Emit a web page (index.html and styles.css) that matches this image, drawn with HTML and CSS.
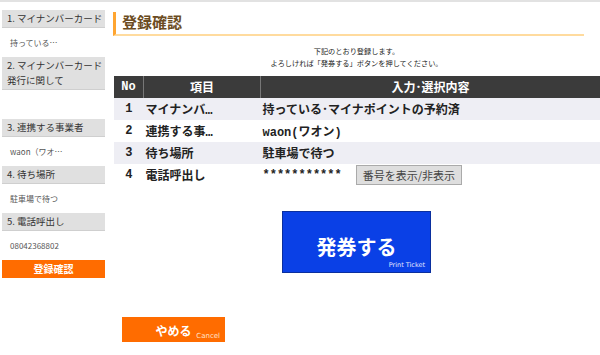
FILE: index.html
```html
<!DOCTYPE html>
<html>
<head>
    <title>登録確認</title>
    <link rel="stylesheet" href="styles.css">
</head>
<body>

<div id="page">
    <div id="sidebar">
        <div class="step-title">1. マイナンバーカード</div>
        <div class="step-value">持っている…</div>
        <div class="step-title">2. マイナンバーカード<br>発行に関して</div>
        <div class="step-value"></div>
        <div class="step-title">3. 連携する事業者</div>
        <div class="step-value">waon（ワオ…</div>
        <div class="step-title">4. 待ち場所</div>
        <div class="step-value">駐車場で待つ</div>
        <div class="step-title">5. 電話呼出し</div>
        <div class="step-value">08042368802</div>
        <div class="step-current">登録確認</div>
    </div>

    <div id="main">
        <h1 class="page-title">登録確認</h1>
        <p class="guide">下記のとおり登録します。<br>よろしければ「発券する」ボタンを押してください。</p>

        <table class="confirm">
            <tr>
                <th class="col-no">No</th>
                <th class="col-item">項目</th>
                <th>入力･選択内容</th>
            </tr>
            <tr>
                <td class="col-no">1</td>
                <td>マイナンバ…</td>
                <td>持っている･マイナポイントの予約済</td>
            </tr>
            <tr>
                <td class="col-no">2</td>
                <td>連携する事…</td>
                <td>waon(ワオン)</td>
            </tr>
            <tr>
                <td class="col-no">3</td>
                <td>待ち場所</td>
                <td>駐車場で待つ</td>
            </tr>
            <tr>
                <td class="col-no">4</td>
                <td>電話呼出し</td>
                <td><span id="tel">***********</span><button type="button" class="toggle" onclick="toggleTel()">番号を表示/非表示</button></td>
            </tr>
        </table>

        <div class="print-wrap">
            <button type="button" class="btn-print">
                <span class="btn-main">発券する</span>
                <span class="btn-sub">Print Ticket</span>
            </button>
        </div>

        <button type="button" class="btn-cancel">
            <span class="btn-main">やめる</span>
            <span class="btn-sub">Cancel</span>
        </button>
    </div>
</div>

<script>
    let shown = false;
    function toggleTel() {
        shown = !shown;
        document.getElementById('tel').innerText = shown ? '08042368802' : '***********';
    }
</script>

</body>
</html>
```

FILE: styles.css
```css
body {
    margin: 0;
    border-top: 2px solid #e2e2e2;
    font-family: "Noto Sans CJK JP", sans-serif;
    color: #333;
    background-color: #fff;
}
#page {
    display: flex;
    padding-top: 8px;
}
#sidebar {
    width: 103px;
    margin-left: 2px;
    flex-shrink: 0;
}
.step-title {
    background-color: #e0e0e0;
    border-bottom: 1px solid #cfcfcf;
    padding: 1px 0 1px 5px;
    font-size: 9.5px;
    line-height: 15px;
    color: #333;
    white-space: nowrap;
}
.step-value {
    height: 29px;
    line-height: 29px;
    padding-left: 8px;
    font-size: 8px;
    color: #555;
}
.step-current {
    background-color: #ff6c00;
    color: #fff;
    font-size: 10px;
    font-weight: bold;
    line-height: 18px;
    text-align: center;
}
#main {
    flex: 1;
    margin-left: 8px;
}
.page-title {
    margin: 2px 16px 0 0;
    height: 22px;
    border-left: 3px solid #ffa531;
    border-bottom: 2px solid #ffdb9e;
    padding-left: 6px;
    font-size: 15px;
    line-height: 20px;
    color: #6b4c22;
}
.guide {
    margin: 9px 0 0 0;
    text-align: center;
    font-size: 7.2px;
    line-height: 12px;
    color: #222;
}
.confirm {
    margin: 7px 0 0 1px;
    width: 486px;
    border-collapse: collapse;
    font-family: "Liberation Mono", "Noto Sans CJK JP", monospace;
    font-weight: bold;
    font-size: 12px;
    color: #222;
}
.confirm th {
    background-color: #3b3b3b;
    color: #fff;
    height: 22px;
    padding: 0;
    border-left: 1px solid #777;
}
.confirm th:first-child {
    border-left: none;
}
.confirm td {
    height: 22px;
    padding: 0 0 0 2px;
    white-space: nowrap;
}
.confirm tr:nth-child(even) td {
    background-color: #eeeef4;
}
.confirm tr:nth-child(odd) td {
    background-color: #fff;
}
.confirm .col-no {
    width: 29px;
    text-align: center;
    padding: 0;
}
.confirm .col-item {
    width: 116px;
}
.toggle {
    margin-left: 14px;
    padding: 0 6px;
    height: 20px;
    background-color: #dedede;
    border: 1px solid #aaa;
    font-family: "Noto Sans CJK JP", sans-serif;
    font-size: 11px;
    color: #444;
    vertical-align: middle;
}
.print-wrap {
    margin-top: 25px;
    text-align: center;
}
.btn-print {
    width: 149px;
    height: 62px;
    padding: 19px 0 0 0;
    background-color: #0a40e6;
    border: 1px solid #0a2f9e;
    color: #fff;
    font-family: "Noto Sans CJK JP", sans-serif;
    vertical-align: top;
}
.btn-print .btn-main {
    display: block;
    font-size: 20px;
    font-weight: bold;
    line-height: 26px;
}
.btn-print .btn-sub {
    display: block;
    text-align: right;
    padding-right: 5px;
    font-family: "DejaVu Sans", sans-serif;
    font-size: 6.5px;
    line-height: 10px;
    color: #e4e8ff;
}
.btn-cancel {
    display: block;
    margin: 44px 0 0 9px;
    width: 103px;
    height: 25px;
    padding: 0;
    background-color: #ff6c00;
    border: none;
    color: #fff;
    font-family: "Noto Sans CJK JP", sans-serif;
}
.btn-cancel .btn-main {
    display: block;
    font-size: 12px;
    font-weight: bold;
    line-height: 24px;
}
.btn-cancel .btn-sub {
    display: block;
    margin-top: -11px;
    text-align: right;
    padding-right: 5px;
    font-family: "DejaVu Sans", sans-serif;
    font-size: 7px;
    line-height: 8px;
    color: #ffe2cc;
}
```
